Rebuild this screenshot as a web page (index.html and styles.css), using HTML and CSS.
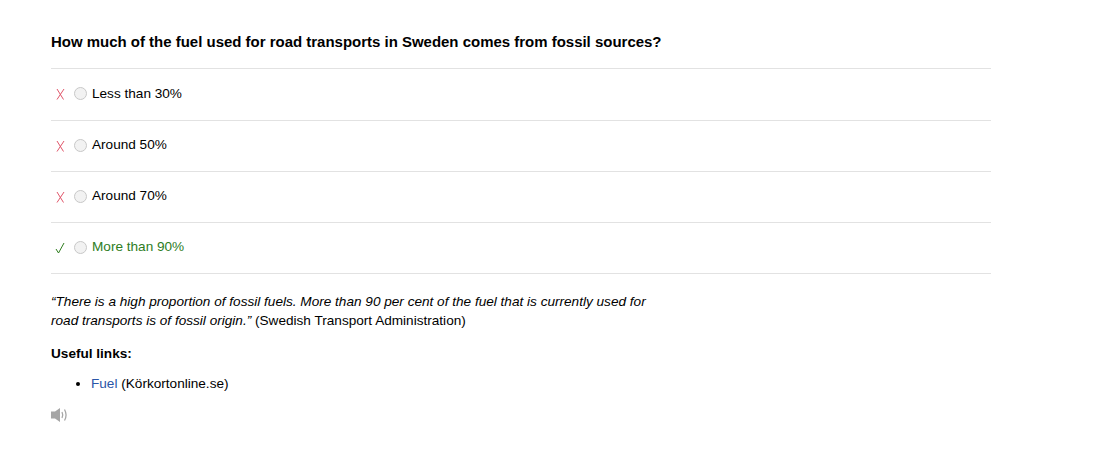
FILE: index.html
```html
<!DOCTYPE html>
<html lang="en">
<head>
    <meta charset="UTF-8">
    <meta name="viewport" content="width=device-width, initial-scale=1.0">
    <title>Question</title>
    <link rel="stylesheet" href="styles.css">
</head>
<body>
    <main class="quiz">
        <h2 class="question">How much of the fuel used for road transports in Sweden comes from fossil sources?</h2>

        <ul class="answers">
            <li class="answer">
                <svg class="mark wrong" width="10" height="12" viewBox="0 0 10 12" aria-hidden="true"><path d="M2 1l6.500 10.500M9 1L2 11.500"/></svg>
                <span class="radio"></span>
                <span>Less than 30%</span>
            </li>
            <li class="answer">
                <svg class="mark wrong" width="10" height="12" viewBox="0 0 10 12" aria-hidden="true"><path d="M2 1l6.500 10.500M9 1L2 11.500"/></svg>
                <span class="radio"></span>
                <span>Around 50%</span>
            </li>
            <li class="answer">
                <svg class="mark wrong" width="10" height="12" viewBox="0 0 10 12" aria-hidden="true"><path d="M2 1l6.500 10.500M9 1L2 11.500"/></svg>
                <span class="radio"></span>
                <span>Around 70%</span>
            </li>
            <li class="answer correct">
                <svg class="mark" width="10" height="12" viewBox="0 0 10 12" aria-hidden="true"><path d="M1 7l2.500 4L9 1"/></svg>
                <span class="radio"></span>
                <span>More than 90%</span>
            </li>
        </ul>

        <p class="comment"><em>“There is a high proportion of fossil fuels. More than 90 per cent of the fuel that is currently used for road transports is of fossil origin.”</em> (Swedish Transport Administration)</p>

        <p class="links-title">Useful links:</p>
        <ul class="links">
            <li><a href="#">Fuel</a> (Körkortonline.se)</li>
        </ul>

        <!-- Ljudknapp -->
        <svg class="sound" width="18" height="16" viewBox="0 0 18 16" aria-hidden="true">
            <path d="M0 4.500h4l5-3.500v14l-5-3.500H0z" fill="#a6a6a6"/>
            <path d="M11 5c1 2 1 4 0 6M13.500 2.500c2 3.500 2 7.500 0 11" fill="none" stroke="#a6a6a6" stroke-width="1.300"/>
        </svg>
    </main>
</body>
</html>
```

FILE: styles.css
```css
body {
    font-family: "Liberation Sans", Arial, sans-serif;
    font-size: 13.6px;
    line-height: 20px;
    color: #000;
    background: #fff;
    margin: 0;
    padding: 0;
}

.quiz {
    width: 940px;
    margin-left: 51px;
    padding-top: 32px;
}

.question {
    font-size: 14.97px;
    line-height: 20px;
    font-weight: bold;
    margin: 0 0 16px;
}

.answers {
    list-style: none;
    margin: 0;
    padding: 0;
    border-top: 1px solid #e2e2e2;
}

.answer {
    display: flex;
    align-items: center;
    height: 48px;
    padding-bottom: 2px;
    border-bottom: 1px solid #e2e2e2;
}

.answer:first-child {
    height: 49px;
}

.mark {
    width: 10px;
    height: 12px;
    margin: 1px 9px 0 4px;
    fill: none;
    stroke: #2e7d1e;
    stroke-width: 1;
}

.mark.wrong {
    stroke: #e0566a;
}

.radio {
    width: 13px;
    height: 13px;
    border: 1px solid #c8c8c8;
    border-radius: 50%;
    background: #f2f2f2;
    box-sizing: border-box;
    margin: 0 5px 0 0;
}

.correct {
    color: #2e7d1e;
}

.comment {
    width: 610px;
    line-height: 19px;
    margin: 18px 0 0;
}

.links-title {
    font-weight: bold;
    margin: 14px 0 0;
}

.links {
    margin: 10px 0 0;
    padding-left: 40px;
}

.links a {
    color: #2a56a8;
    text-decoration: none;
}

.sound {
    display: block;
    margin-top: 13px;
}
```
